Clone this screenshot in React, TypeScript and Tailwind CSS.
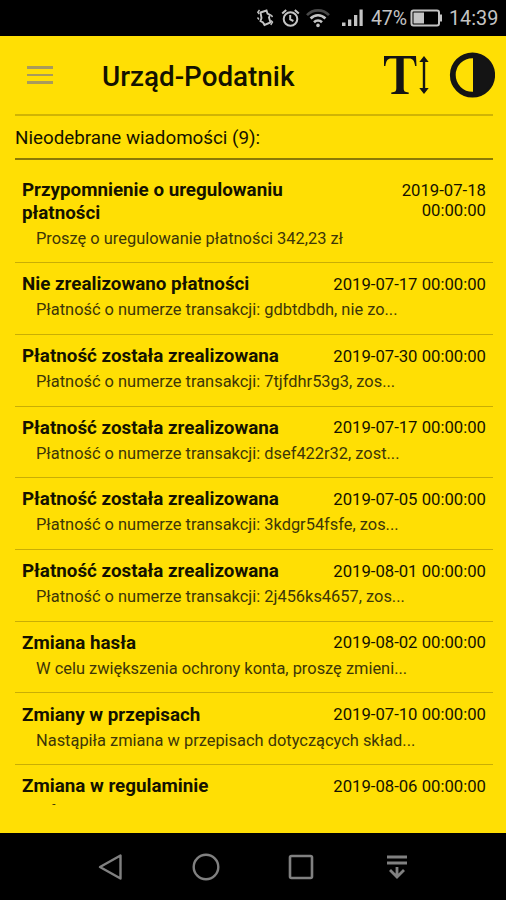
type Message = {
  title: string;
  date: string;
  body: string;
};

const messages: Message[] = [
  { title: 'Przypomnienie o uregulowaniu płatności', date: '2019-07-18 00:00:00', body: 'Proszę o uregulowanie płatności 342,23 zł' },
  { title: 'Nie zrealizowano płatności', date: '2019-07-17 00:00:00', body: 'Płatność o numerze transakcji: gdbtdbdh, nie zo...' },
  { title: 'Płatność została zrealizowana', date: '2019-07-30 00:00:00', body: 'Płatność o numerze transakcji: 7tjfdhr53g3, zos...' },
  { title: 'Płatność została zrealizowana', date: '2019-07-17 00:00:00', body: 'Płatność o numerze transakcji: dsef422r32, zost...' },
  { title: 'Płatność została zrealizowana', date: '2019-07-05 00:00:00', body: 'Płatność o numerze transakcji: 3kdgr54fsfe, zos...' },
  { title: 'Płatność została zrealizowana', date: '2019-08-01 00:00:00', body: 'Płatność o numerze transakcji: 2j456ks4657, zos...' },
  { title: 'Zmiana hasła', date: '2019-08-02 00:00:00', body: 'W celu zwiększenia ochrony konta, proszę zmieni...' },
  { title: 'Zmiany w przepisach', date: '2019-07-10 00:00:00', body: 'Nastąpiła zmiana w przepisach dotyczących skład...' },
  { title: 'Zmiana w regulaminie', date: '2019-08-06 00:00:00', body: 'Informujemy, że zmianie uległ regulamin aplik...' },
];

function StatusBar() {
  return (
    <div className="flex h-9 shrink-0 items-center bg-black text-[#c4c4c4]">
      <svg className="ml-[256px] shrink-0" width="18" height="20" viewBox="0 0 18 20" fill="none" stroke="currentColor" strokeWidth="1.9">
        <path d="m4.500 4.500 6-2 1 3 2.500 1.500-1 2.500 1.500 5-6 2.500-1.500-2.500-2.500-1.500 1-3z" />
        <path d="M3.500 1.800 1.800 4.300l1.400 1.700M1.500 9.500l1.500 2M15.200 7l1.300 2M15 12.500l1.500 1.700-1.700 2.800" strokeWidth="1.4" />
      </svg>
      <svg className="ml-[7px] shrink-0" width="19" height="20" viewBox="0 0 19 20" fill="none" stroke="currentColor" strokeWidth="2">
        <circle cx="9.500" cy="11" r="6.800" />
        <path d="M9.200 7v4.400l3.200 1.600M1.200 5.600l4-3.600M17.800 5.600l-4-3.600" />
      </svg>
      <svg className="ml-[6px] shrink-0" width="24" height="20" viewBox="0 0 24 20" fill="none" stroke="currentColor" strokeWidth="2.6">
        <path d="M1 7.200C7 .7 17 .7 23 7.200" stroke="#484848" />
        <path d="M4.600 10.500c4.200-4.300 10.600-4.300 14.800 0" />
        <path d="M8 14.200c2.300-2.200 5.700-2.200 8 0" />
        <circle cx="12" cy="17.400" r="1.800" fill="currentColor" stroke="none" />
      </svg>
      <svg className="ml-[11px] shrink-0" width="22" height="20" viewBox="0 0 22 20" fill="currentColor">
        <path d="M1 14.500h3.500V18H1zM7 11.500h3.300V18H7zM13 7h3.300v11H13zM18.500 1.500h3.200V18h-3.200z" />
      </svg>
      <span className="ml-[8px] w-[37px] pt-[2px] whitespace-nowrap text-[19.500px] leading-none tracking-[-0.1px]">47%</span>
      <svg className="ml-[2px] shrink-0" width="33" height="20" viewBox="0 0 33 20" fill="none" stroke="currentColor" strokeWidth="2">
        <rect x="1.500" y="2.500" width="27.500" height="15" rx="2" />
        <path d="M3.500 4.500H14v11H3.500z" fill="currentColor" stroke="none" />
        <path d="M31 6.500v7" />
      </svg>
      <span className="ml-[6px] pt-[2px] whitespace-nowrap text-[19.800px] leading-none">14:39</span>
    </div>
  );
}

function Header() {
  return (
    <header className="flex h-[78px] shrink-0 items-center pr-[11px] pl-[27px]">
      <button aria-label="Menu" className="flex w-[26px] flex-col gap-[5px]">
        <span className="h-[2.500px] bg-[#a89b5c]" />
        <span className="h-[2.500px] bg-[#a89b5c]" />
        <span className="h-[2.500px] bg-[#a89b5c]" />
      </button>
      <h1 className="mt-[3px] ml-[49px] text-[27.800px] font-medium whitespace-nowrap">Urząd-Podatnik</h1>
      <svg className="ml-auto shrink-0" width="48" height="46" viewBox="0 0 48 46" fill="#141414">
        <path d="M1 4h32l.5 10h-1.400c-.6-5-2.300-7.400-6-7.400h-5.400V36c0 3.400 1 4.200 5 4.400V42H8.300v-1.600c4-.2 5-1 5-4.400V6.600H8.200C4.700 6.600 3 9 2.400 14H1z" />
        <path d="m41 4 4.700 6h-3.500v26h3.500L41 42l-4.700-6h3.500V10h-3.500z" />
      </svg>
      <svg className="ml-[18px] shrink-0" width="46" height="46" viewBox="0 0 46 46">
        <circle cx="23.500" cy="23" r="19.700" fill="none" stroke="#141414" strokeWidth="5.800" />
        <path d="M24 3a20 20 0 0 1 0 40z" fill="#141414" />
      </svg>
    </header>
  );
}

function MessageRow({ message }: { message: Message }) {
  return (
    <li className="border-b border-[#c9ae05] px-[7px] pt-[10.200px] pb-[12.500px]">
      <div className="flex items-start justify-between">
        <h2 className="text-[18.800px] leading-[22.500px] font-bold">{message.title}</h2>
        <time className="mt-[1.500px] text-right text-[16.700px] leading-[20px]">{message.date}</time>
      </div>
      <p className="mt-[3.500px] ml-[14px] h-[22px] text-[16.420px] leading-[22px] whitespace-nowrap text-[#3d3608]">{message.body}</p>
    </li>
  );
}

function NavigationBar() {
  return (
    <nav className="flex h-[67px] shrink-0 items-center bg-black pl-[98px] text-[#808080]">
      <svg width="26" height="28" viewBox="0 0 26 28" fill="none" stroke="currentColor" strokeWidth="2.400" strokeLinejoin="round">
        <path d="M22.500 2.500v23L2 14z" />
      </svg>
      <svg className="ml-[67px]" width="30" height="30" viewBox="0 0 30 30" fill="none" stroke="currentColor" strokeWidth="2.400">
        <circle cx="15" cy="15" r="12.300" />
      </svg>
      <svg className="ml-[67px]" width="26" height="26" viewBox="0 0 26 26" fill="none" stroke="currentColor" strokeWidth="2.600">
        <rect x="2" y="2" width="22" height="22" rx="1.500" />
      </svg>
      <svg className="ml-[73px]" width="20" height="26" viewBox="0 0 20 26" fill="none" stroke="currentColor" strokeWidth="2.800">
        <path d="M0 3h20M0 9h20M10 13v10M3 16l7 7 7-7" />
      </svg>
    </nav>
  );
}

export default function App() {
  return (
    <div className="flex h-[900px] w-[506px] flex-col overflow-hidden bg-[#ffdf04] font-[Roboto,sans-serif] text-[#141200]">
      <StatusBar />
      <Header />
      <main className="mr-[13px] ml-[15px] flex min-h-0 flex-1 flex-col">
        <p className="h-[46px] shrink-0 border-t-2 border-b-2 border-t-[#d0b405] border-b-[#8c7a05] text-[18.800px] leading-[44px]">Nieodebrane wiadomości (9):</p>
        <ul className="mt-[9px] mb-[28px] min-h-0 flex-1 overflow-hidden">
          {messages.map((message, i) => (
            <MessageRow key={i} message={message} />
          ))}
        </ul>
      </main>
      <NavigationBar />
    </div>
  );
}
